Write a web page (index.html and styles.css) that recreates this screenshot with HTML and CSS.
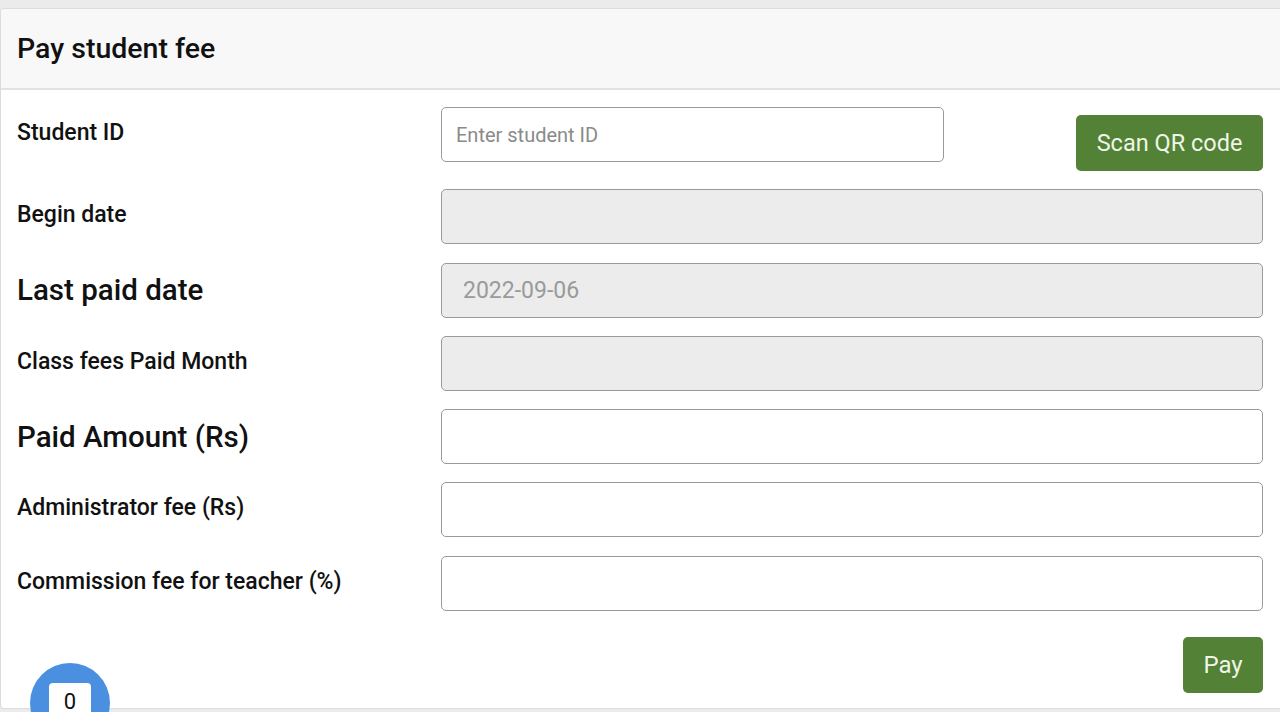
FILE: index.html
```html
<!DOCTYPE html>
<html>
<head>
<meta charset="utf-8">
<link rel="stylesheet" href="styles.css">
</head>
<body>
<div class="card">
  <div class="card-header">Pay student fee</div>
  <div class="card-body">
    <div class="row row-first">
      <label class="label">Student ID</label>
      <input class="field field-short" type="text" placeholder="Enter student ID">
      <button class="btn btn-scan">Scan QR code</button>
    </div>
    <div class="row">
      <label class="label">Begin date</label>
      <input class="field disabled" type="text" disabled>
    </div>
    <div class="row">
      <label class="label label-big">Last paid date</label>
      <input class="field disabled field-date" type="text" value="2022-09-06" disabled>
    </div>
    <div class="row">
      <label class="label">Class fees Paid Month</label>
      <input class="field disabled" type="text" disabled>
    </div>
    <div class="row">
      <label class="label label-big">Paid Amount (Rs)</label>
      <input class="field" type="text">
    </div>
    <div class="row">
      <label class="label">Administrator fee (Rs)</label>
      <input class="field" type="text">
    </div>
    <div class="row">
      <label class="label">Commission fee for teacher (%)</label>
      <input class="field" type="text">
    </div>
    <div class="actions">
      <button class="btn btn-pay">Pay</button>
    </div>
  </div>
</div>
<div class="bubble"><span class="bubble-count">0</span></div>
</body>
</html>
```
FILE: styles.css
```css
html, body {
  margin: 0;
  padding: 0;
  height: 712px;
  overflow: hidden;
}
body {
  background: #ebebeb;
  font-family: Roboto, "Liberation Sans", sans-serif;
  color: #111;
}
.card {
  margin-top: 8px;
  background: #fff;
  border: 1px solid #dcdcdc;
  border-right: none;
  border-radius: 4px 0 0 4px;
  height: 701px;
  box-sizing: border-box;
  overflow: hidden;
}
.card-header {
  background: #f8f8f8;
  border-bottom: 2px solid #e2e2e2;
  height: 81px;
  box-sizing: border-box;
  padding-left: 16px;
  display: flex;
  align-items: center;
  font-size: 28.5px;
  font-weight: 500;
  color: #111;
}
.card-body {
  padding: 17px 17px 0 16px;
  display: flex;
  flex-direction: column;
  gap: 18.3px;
}
.row {
  display: flex;
  align-items: flex-start;
  height: 55px;
}
.row-first {
  height: 64px;
}
.label {
  width: 424px;
  flex: none;
  height: 55px;
  display: flex;
  align-items: center;
  font-size: 23px;
  font-weight: 500;
  color: #111;
  margin-top: -2px;
}
.label-big {
  font-size: 29.5px;
  margin-top: 0;
}
.field {
  flex: 1;
  height: 55px;
  box-sizing: border-box;
  border: 1.5px solid #999;
  border-radius: 5px;
  background: #fff;
  font-family: Roboto, "Liberation Sans", sans-serif;
  font-size: 20px;
  padding: 0 14px;
  outline: none;
  margin: 0;
}
.field::placeholder {
  color: #8a8a8a;
}
.field-short {
  flex: none;
  width: 503px;
}
.disabled {
  background: #ececec;
}
.field-date {
  font-size: 23px;
  color: #9a9a9a;
  padding-left: 21px;
}
.btn {
  border: none;
  border-radius: 5px;
  background: #538135;
  color: #eef6e8;
  font-family: Roboto, "Liberation Sans", sans-serif;
  font-size: 23.5px;
  height: 56px;
  padding: 0 22px;
  cursor: pointer;
}
.btn-scan {
  margin-left: auto;
  margin-top: 8px;
  width: 187px;
  padding: 0;
}
.actions {
  display: flex;
  justify-content: flex-end;
  margin-top: 8px;
}
.btn-pay {
  width: 80px;
  padding: 0;
  font-size: 24px;
}
.bubble {
  position: fixed;
  left: 30px;
  top: 663px;
  width: 80px;
  height: 80px;
  border-radius: 50%;
  background: #4a8fe0;
  display: flex;
  justify-content: center;
}
.bubble-count {
  margin-top: 20px;
  width: 42px;
  height: 40px;
  background: #fff;
  border-radius: 4px;
  text-align: center;
  font-size: 22px;
  line-height: 34px;
  padding-top: 2px;
  color: #111;
}
```
